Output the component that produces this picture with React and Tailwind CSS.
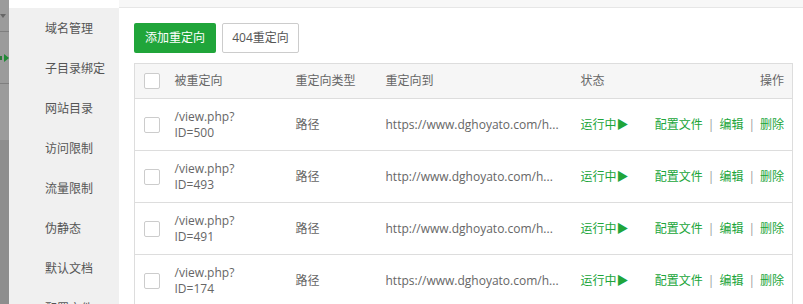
import React from 'react';

const menu = ['域名管理', '子目录绑定', '网站目录', '访问限制', '流量限制', '伪静态', '默认文档', '配置文件'];

const rows = [
  { id: '500', url: 'https://www.dghoyato.com/h...' },
  { id: '493', url: 'http://www.dghoyato.com/h...' },
  { id: '491', url: 'http://www.dghoyato.com/h...' },
  { id: '174', url: 'https://www.dghoyato.com/h...' },
];

const Checkbox = () => (
  <span className="block w-[16px] h-[16px] border border-[#cccccc] rounded-[2px] bg-white" />
);

const App = () => {
  return (
    <div
      className="w-[803px] h-[304px] overflow-hidden flex bg-white text-[12px] text-[#666]"
      style={{ fontFamily: '"Open Sans", "Noto Sans CJK SC", sans-serif' }}
    >
      {/* underlying page edge */}
      <div className="w-[9px] shrink-0 flex flex-col bg-[#8e8e8e]">
        <div className="h-[140px] shrink-0 bg-[#9b9b9b] flex flex-col">
          <div className="h-[32px] shrink-0 border-b border-[#7f7f7f] flex items-center">
            <span className="w-0 h-0 border-l-[3px] border-r-[3px] border-t-[4px] border-l-transparent border-r-transparent border-t-[#666]" />
          </div>
          <div className="h-[52px] shrink-0 border-b border-[#7f7f7f] flex items-center">
            <span className="w-[2px] h-[4px] bg-[#2c7a3a]" />
            <span className="ml-[2px] w-0 h-0 border-t-[4px] border-b-[4px] border-l-[5px] border-t-transparent border-b-transparent border-l-[#1f8a35]" />
          </div>
        </div>
      </div>

      {/* sidebar */}
      <div className="w-[110px] shrink-0 flex flex-col">
        <div className="h-[8px] shrink-0 bg-white" />
        <div className="flex-1 bg-[#f0f0f0] pt-[1px]">
          {menu.map((m) => (
            <div key={m} className="h-[40px] flex items-center pl-[36px] text-[#555] whitespace-nowrap">
              {m}
            </div>
          ))}
        </div>
      </div>

      {/* content */}
      <div className="flex-1 flex flex-col">
        <div className="h-[8px] shrink-0 bg-[#f7f7f7] border-b border-[#e6e6e6]" />
        <div className="pl-[15px] pr-[10px] pt-[15px] shrink-0">
          <div className="flex gap-[6px]">
            <button className="h-[30px] w-[82px] rounded-[2px] bg-[#20a53a] text-white">添加重定向</button>
            <button className="h-[30px] w-[77px] rounded-[2px] border border-[#cccccc] bg-white text-[#555]">404重定向</button>
          </div>
          <table className="mt-[10px] w-[659px] table-fixed border-collapse border border-[#dddddd]">
            <colgroup>
              <col className="w-[30px]" />
              <col className="w-[121px]" />
              <col className="w-[90px]" />
              <col className="w-[195px]" />
              <col className="w-[74px]" />
              <col />
            </colgroup>
            <thead>
              <tr className="h-[35px] bg-[#f6f6f6] border-b border-[#dddddd]">
                <th className="pl-[9px] font-normal"><Checkbox /></th>
                <th className="pl-[10px] text-left font-normal">被重定向</th>
                <th className="pl-[10px] text-left font-normal">重定向类型</th>
                <th className="pl-[10px] text-left font-normal">重定向到</th>
                <th className="pl-[10px] text-left font-normal">状态</th>
                <th className="pr-[8px] text-right font-normal">操作</th>
              </tr>
            </thead>
            <tbody>
              {rows.map((r) => (
                <tr key={r.id} className="h-[52px] border-b border-[#dddddd]">
                  <td className="pl-[9px]"><Checkbox /></td>
                  <td className="pl-[10px] leading-[16px]">
                    <div>/view.php?</div>
                    <div>ID={r.id}</div>
                  </td>
                  <td className="pl-[10px]">路径</td>
                  <td className="pl-[10px] whitespace-nowrap">{r.url}</td>
                  <td className="pl-[10px] text-[#20a53a] whitespace-nowrap">运行中▶</td>
                  <td className="pr-[8px] text-right whitespace-nowrap">
                    <span className="text-[#20a53a]">配置文件</span>
                    <span className="mx-[5px] text-[#999]">|</span>
                    <span className="text-[#20a53a]">编辑</span>
                    <span className="mx-[5px] text-[#999]">|</span>
                    <span className="text-[#20a53a]">删除</span>
                  </td>
                </tr>
              ))}
            </tbody>
          </table>
        </div>
      </div>
    </div>
  );
};

export default App;
